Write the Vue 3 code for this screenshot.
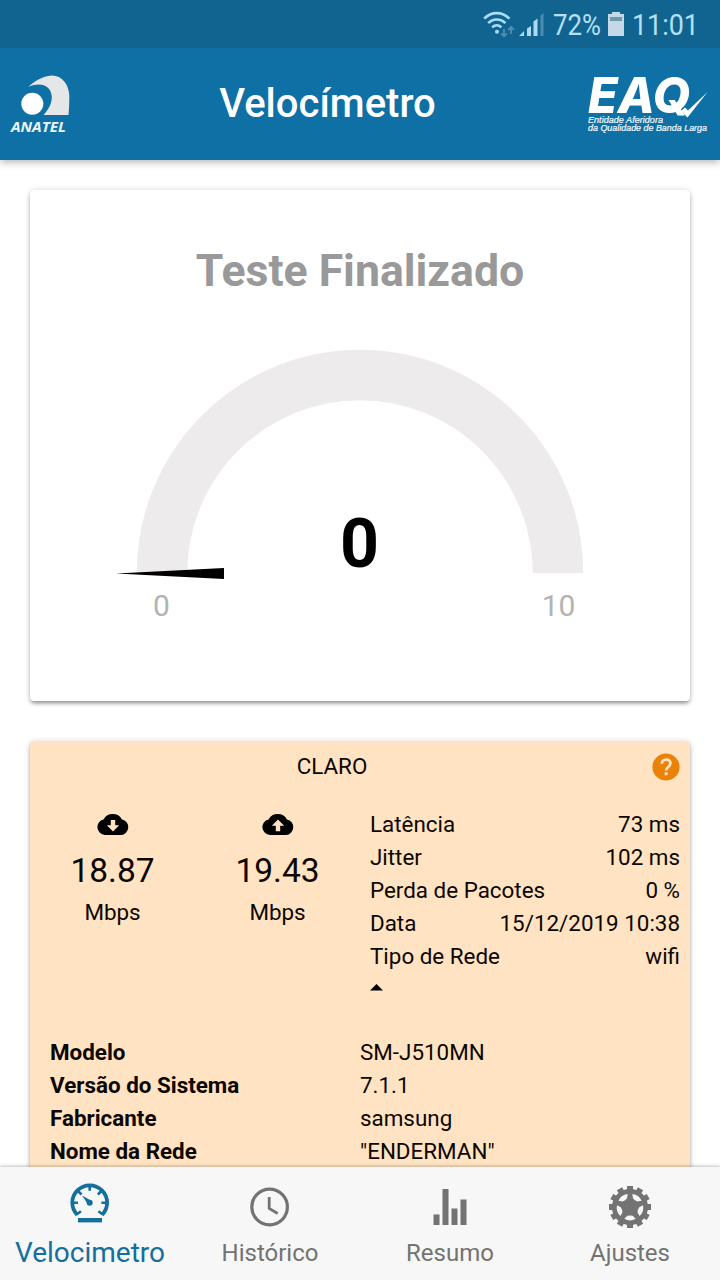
<template>
  <div class="screen">
    <header class="top">
      <div class="status">
        <svg width="30" height="28" viewBox="0 0 30 28" fill="none" stroke="#a9dcf8" stroke-width="2.6">
          <path d="M1.2 8.7c7-7.4 18.2-7.4 25.2 0M5.2 13.2c4.8-5 12.4-5 17.2 0M9.2 17.4c2.8-2.8 6.4-2.8 9.2 0" />
          <circle cx="14" cy="21.7" r="2" fill="#a9dcf8" stroke="none" />
          <path d="M21 19v7M18 23.3l3 3 3-3M28 24v-7M25 20l3-3 3 3" stroke="#508fb5" stroke-width="1.8" />
        </svg>
        <svg class="signal" width="26" height="25" viewBox="0 0 26 25" fill="#a9dcf8">
          <path d="M0 24l5-5v5zM8 16.5l4-2.5v10H8zM14.5 9.5l4-3V24h-4z" />
          <path d="M21.5 3.5l3-2.500v23h-3z" fill="#4c8cb1" />
        </svg>
        <svg class="pct" width="50" height="48">
          <text x="0" y="35" textLength="48" lengthAdjust="spacingAndGlyphs">72%</text>
        </svg>
        <svg class="battery" width="16" height="24" viewBox="0 0 16 24">
          <path d="M4 2V0h8v2h4v22H0V2z" fill="#c4d9e5" />
          <path d="M2 5h12v4H2z" fill="#6f99b0" />
        </svg>
        <svg class="time" width="70" height="48">
          <text x="0" y="35" textLength="67" lengthAdjust="spacingAndGlyphs">11:01</text>
        </svg>
      </div>
      <div class="toolbar">
        <svg class="anatel" width="62" height="62" viewBox="0 0 62 62">
          <path d="M18 14C27 6 36 2.500 42 2.500c10 0 17 9 17.300 20 .1 7-.2 12-.8 19.500H33.500c5-5.500 8.500-11.500 8.300-18.500C41 14 33 8 18 14z" fill="#e4e6e8" />
          <circle cx="22.300" cy="30.800" r="11" fill="#fff" />
          <text x="1" y="58.500" textLength="55" lengthAdjust="spacingAndGlyphs">ANATEL</text>
        </svg>
        <h1>Velocímetro</h1>
        <svg class="eaq" width="122" height="62" viewBox="0 0 122 62">
          <text class="eaq-name" x="1" y="39.500" textLength="102" lengthAdjust="spacingAndGlyphs">EAQ</text>
          <path d="M94 38l6.500 6.500L120.500 19 101 37.500l-3-3z" fill="#fff" />
          <text class="eaq-sub" x="1" y="49.500" textLength="75" lengthAdjust="spacingAndGlyphs">Entidade Aferidora</text>
          <text class="eaq-sub" x="1" y="57.500" textLength="119" lengthAdjust="spacingAndGlyphs">da Qualidade de Banda Larga</text>
        </svg>
      </div>
    </header>

    <main class="content">
      <section class="card gauge-card">
        <h2>Teste Finalizado</h2>
        <svg class="gauge" width="500" height="290" viewBox="0 0 500 290">
          <path d="M52 233a198 198 0 0 1 396 0" fill="none" stroke="#edebec" stroke-width="50.500" />
          <path d="M6 233.500l108-5.500v11z" />
          <text class="gauge-value" x="249.500" y="227">0</text>
          <text class="gauge-limit" x="51.500" y="276">0</text>
          <text class="gauge-limit" x="448.500" y="276">10</text>
        </svg>
      </section>

      <section class="card result">
        <div class="result-head">
          <span class="carrier">CLARO</span>
          <svg width="28" height="28" viewBox="0 0 28 28">
            <circle cx="14" cy="14" r="13.600" fill="#e98207" />
            <path d="M9.800 10.800c0-5.600 8.600-5.600 8.600-.5 0 3.600-4.300 3.700-4.300 7.200" fill="none" stroke="#ffe3c2" stroke-width="2.800" />
            <path d="M12.700 19.300h2.900v2.900h-2.900z" fill="#ffe3c2" />
          </svg>
        </div>
        <div class="summary">
          <div v-for="s in speeds" :key="s.value" class="speed">
            <svg width="32" height="21" viewBox="0 0 32 21" fill-rule="evenodd">
              <path :d="cloud + s.arrow" />
            </svg>
            <strong>{{ s.value }}</strong>
            <span>Mbps</span>
          </div>
          <div class="metrics">
            <div v-for="m in metrics" :key="m[0]" class="metric">
              <span>{{ m[0] }}</span>
              <span>{{ m[1] }}</span>
            </div>
            <svg class="caret" width="13" height="7" viewBox="0 0 13 7"><path d="M0 6.500L6.500 0 13 6.500z" /></svg>
          </div>
        </div>
        <dl class="details">
          <template v-for="d in details" :key="d[0]">
            <dt>{{ d[0] }}</dt>
            <dd>{{ d[1] }}</dd>
          </template>
        </dl>
      </section>
    </main>

    <nav class="tabs">
      <a class="tab active">
        <svg width="42" height="42" viewBox="0 0 42 42" fill="none" stroke="currentColor">
          <path d="M8.300 28.900a17.400 17.400 0 1 1 24.800 0" stroke-width="3.800" />
          <path d="M20.700 0v4.800M4 16.700h5M32.400 16.700h5M9 5l3.500 3.500M32.400 5l-3.500 3.500M7.500 28.500l4.500-3.200M33.900 28.500l-4.500-3.200" stroke-width="2.600" />
          <path d="M13.200 9.500l9.500 5.500-3.500 4z" fill="currentColor" stroke="none" />
          <circle cx="20.700" cy="16.800" r="3" fill="currentColor" stroke="none" />
          <path d="M9 34.200h24" stroke-width="4.400" />
        </svg>
        <span>Velocimetro</span>
      </a>
      <a class="tab">
        <svg width="42" height="42" viewBox="0 0 42 42" fill="none" stroke="currentColor" stroke-width="3.2">
          <circle cx="20.600" cy="21" r="17.800" />
          <path d="M20.200 11v11.500l8.500 5" stroke-width="2.800" />
        </svg>
        <span>Histórico</span>
      </a>
      <a class="tab">
        <svg width="42" height="42" viewBox="0 0 42 42" fill="currentColor">
          <path d="M4.500 28.500h6V39h-6zM13.500 3h6v36h-6zM22.500 22.500h6V39h-6zM31.500 13.500h6V39h-6z" />
        </svg>
        <span>Resumo</span>
      </a>
      <a class="tab">
        <svg width="42" height="42" viewBox="0 0 42 42" fill="currentColor">
          <path v-for="a in 12" :key="a" d="M18 0h6v5h-6z" :transform="`rotate(${a * 30} 21 21)`" />
          <circle cx="21" cy="21" r="18" />
          <path
            v-for="a in 5"
            :key="'h' + a"
            d="M15.300 32.800l3-3q2.700-.8 5.400 0l3 3q-5.700 3.400-11.400 0z"
            fill="#f7f7f7"
            :transform="`rotate(${a * 72} 21 21)`"
          />
        </svg>
        <span>Ajustes</span>
      </a>
    </nav>
  </div>
</template>

<script setup>
const cloud = 'M8 21A7.900 7.900 0 0 1 6.500 5.400A10.600 10.600 0 0 1 25 5.400A7.900 7.900 0 0 1 24 21z'

const speeds = [
  { value: '18.87', arrow: 'M13.800 6h4.400v5.200h4L16 17.500 9.800 11.200h4z' },
  { value: '19.43', arrow: 'M13.800 17.200h4.400v-5.400h4L16 5.500 9.800 11.800h4z' },
]

const metrics = [
  ['Latência', '73 ms'],
  ['Jitter', '102 ms'],
  ['Perda de Pacotes', '0 %'],
  ['Data', '15/12/2019 10:38'],
  ['Tipo de Rede', 'wifi'],
]

const details = [
  ['Modelo', 'SM-J510MN'],
  ['Versão do Sistema', '7.1.1'],
  ['Fabricante', 'samsung'],
  ['Nome da Rede', '"ENDERMAN"'],
]
</script>

<style>
body { margin: 0; }
</style>

<style scoped>
.screen { display: flex; flex-direction: column; width: 720px; height: 1280px; overflow: hidden; background: #fff; color: #0c0600; font: 22.4px/33px Roboto, sans-serif; }
svg { display: block; flex-shrink: 0; overflow: visible; }

.top { flex-shrink: 0; z-index: 1; box-shadow: 0 2px 8px rgba(0, 0, 0, .3); }
.status { display: flex; align-items: center; height: 48px; padding-left: 483px; background: #11648f; }
.status text { font-size: 30px; fill: #b4e0f8; }
.signal { margin-left: 6px; }
.pct { margin-left: 8px; }
.battery { margin-left: 5px; }
.time { margin-left: 8px; }
.toolbar { display: flex; align-items: center; justify-content: space-between; height: 112px; padding: 0 11px 0 10px; background: #0e70a4; }
.toolbar h1 { margin: 0 0 0 -4px; font-size: 40px; font-weight: 500; line-height: 48px; color: #fff; }
.anatel text { font: italic bold 14.5px "Open Sans", sans-serif; fill: #e9f6fd; }
.eaq-name { font: italic 800 50px Inter, sans-serif; fill: #fff; }
.eaq-sub { font: italic 9px "Liberation Sans", sans-serif; fill: #f4fbff; stroke: #f4fbff; stroke-width: .2px; }

.content { display: flex; flex: 1; flex-direction: column; gap: 40px; min-height: 0; padding: 30px 30px 0; overflow: hidden; }
.card { flex-shrink: 0; border-radius: 4px; box-shadow: 0 3px 4px -1px rgba(0, 0, 0, .42), 0 0 6px rgba(0, 0, 0, .14); }
.gauge-card { display: flex; flex-direction: column; align-items: center; height: 511px; box-sizing: border-box; padding-top: 54px; background: #fff; }
.gauge-card h2 { margin: 0 0 42px; font-size: 44.600px; font-weight: 700; line-height: 54px; color: #999; }
.gauge text { text-anchor: middle; }
.gauge-value { font-size: 68px; font-weight: 700; fill: #000; }
.gauge-limit { font-size: 30px; fill: #b3b3b3; }

.result { height: 520px; background: #ffe3c2; }
.result-head { display: flex; align-items: center; height: 51px; padding-right: 10px; }
.carrier { flex: 1; padding-right: 18px; text-align: center; }
.summary { display: grid; grid-template-columns: 1fr 1fr 2fr; height: 244px; padding-top: 16px; box-sizing: border-box; }
.speed { display: flex; flex-direction: column; align-items: center; padding-top: 6px; }
.speed strong { margin: 16px 0 5px; font-size: 33.500px; font-weight: 400; line-height: 40px; }
.metrics { padding: 0 10px; }
.metric { display: flex; justify-content: space-between; }
.caret { margin-top: 11px; }
.details { display: grid; grid-template-columns: 310px 1fr; margin: 0; padding-left: 20px; }
.details dt { font-weight: 700; }
.details dd { margin: 0; }

.tabs { display: grid; grid-template-columns: repeat(4, 1fr); flex-shrink: 0; z-index: 1; height: 113px; background: #f7f7f7; box-shadow: 0 -1px 3px rgba(0, 0, 0, .25); }
.tab { display: flex; flex-direction: column; align-items: center; padding-top: 19px; color: #737373; font-size: 24px; }
.tab span { margin-top: 9px; line-height: 32px; }
.active { color: #146f9f; }
.active span { font-size: 28px; }
</style>
